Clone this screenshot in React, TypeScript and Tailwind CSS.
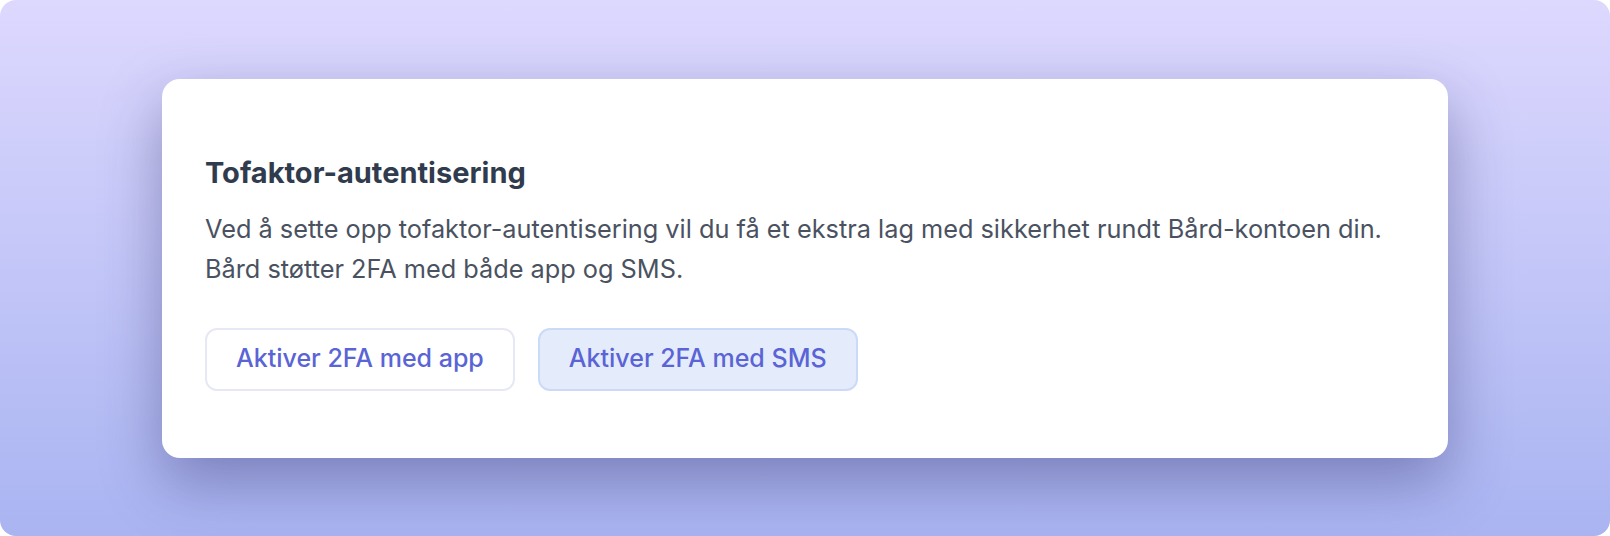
import React from "react";

export default function App() {
  return (
    <div className="w-[1610px] h-[536px] bg-white" style={{ fontFamily: "Inter, 'Noto Sans', sans-serif" }}>
      <div className="w-full h-full rounded-[16px] bg-gradient-to-b from-[#ddd8fe] to-[#a9b4f1] flex items-center justify-center">
        <div className="w-[1286px] h-[379px] bg-white rounded-[18px] shadow-[0_24px_60px_rgba(40,40,100,0.4)] pl-[43px] pr-[43px] pt-[76px]">
          <h2 className="text-[29px] leading-[36px] font-bold text-[#303b4d]">Tofaktor-autentisering</h2>
          <p className="mt-[18px] text-[25.3px] leading-[40px] text-[#4a5261]">
            Ved å sette opp tofaktor-autentisering vil du få et ekstra lag med sikkerhet rundt Bård-kontoen din.
            <br />
            Bård støtter 2FA med både app og SMS.
          </p>
          <div className="mt-[39px] flex gap-[23px]">
            <button className="h-[63px] px-[29px] rounded-[12px] border-2 border-[#e6e9f5] bg-white text-[25px] font-medium text-[#5a64d6]">
              Aktiver 2FA med app
            </button>
            <button className="h-[63px] px-[29px] rounded-[12px] border-2 border-[#cbdaf7] bg-[#e4ecfb] text-[25px] font-medium text-[#5a64d6]">
              Aktiver 2FA med SMS
            </button>
          </div>
        </div>
      </div>
    </div>
  );
}
